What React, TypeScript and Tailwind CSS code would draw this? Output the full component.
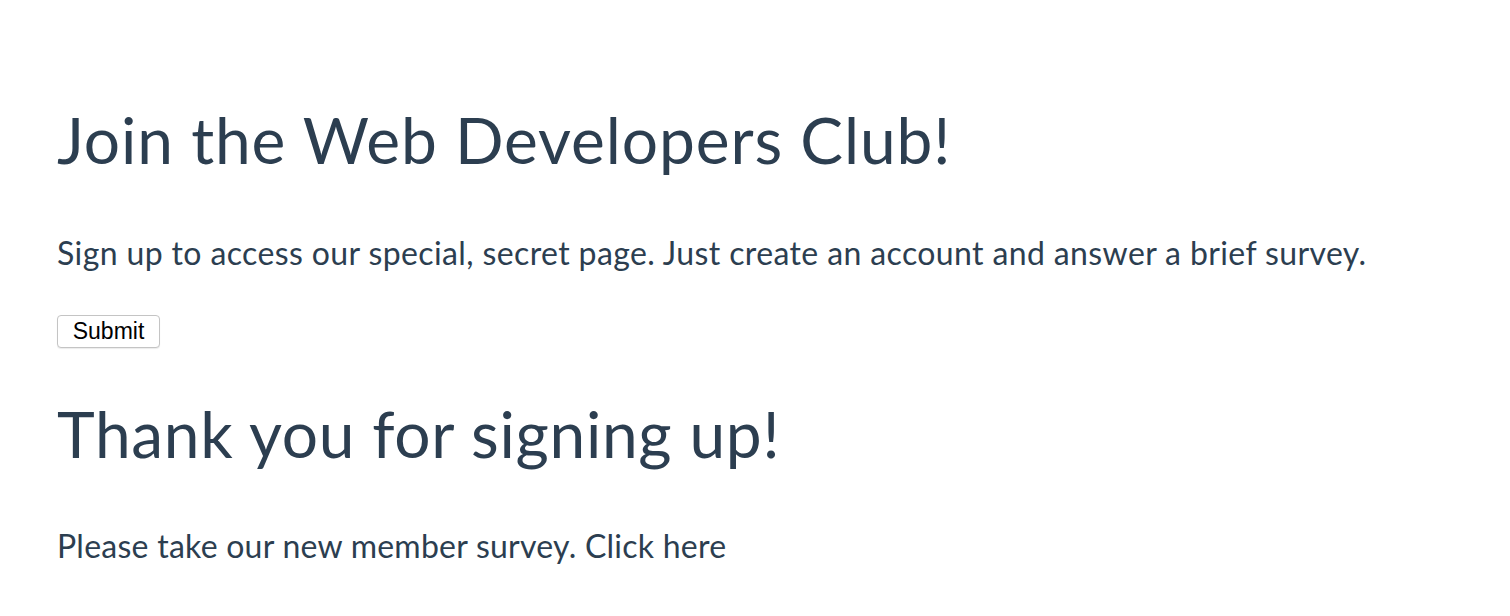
export default function App() {
  return (
    <div className="min-h-screen bg-white px-[57px] pt-[108px] text-[#2c3e50] font-['Lato','Noto_Sans',sans-serif]">
      <h1 className="text-[64px] leading-none font-normal tracking-[0.9px]">Join the Web Developers Club!</h1>
      <p className="mt-[65px] text-[32px] leading-none tracking-[0.38px]">
        Sign up to access our special, secret page. Just create an account and answer a brief survey.
      </p>
      <button
        type="button"
        className="mt-[46px] h-[33px] w-[103px] rounded-[4px] border border-[#c4c4c4] bg-white text-[23px] leading-none text-black font-['Liberation_Sans',Arial,sans-serif] shadow-[0_1px_1px_rgba(0,0,0,0.08)]"
      >
        Submit
      </button>
      <h2 className="mt-[54px] text-[64px] leading-none font-normal tracking-[0.7px]">Thank you for signing up!</h2>
      <p className="mt-[64px] text-[32px] leading-none tracking-[0.25px]">Please take our new member survey. Click here</p>
    </div>
  )
}
